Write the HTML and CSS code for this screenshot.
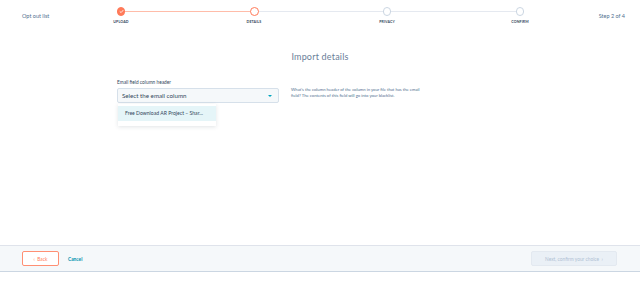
FILE: index.html
```html
<!DOCTYPE html>
<html lang="en">
<head>
    <meta charset="UTF-8">
    <meta name="viewport" content="width=device-width, initial-scale=1.0">
    <title>Opt out list - Import</title>
    <link rel="stylesheet" href="styles.css">
</head>
<body>

    <header class="top">
        <div class="title">Opt out list</div>
        <ol class="stepper">
            <li class="step done">
                <span class="dot">
                    <svg viewBox="0 0 10 10" width="5" height="5"><path d="M2 5.2 L4.2 7.2 L8 2.8" fill="none" stroke="#fff" stroke-width="1.6" stroke-linecap="round" stroke-linejoin="round"/></svg>
                </span>
                <span class="label">UPLOAD</span>
            </li>
            <li class="step current">
                <span class="dot"></span>
                <span class="label">DETAILS</span>
            </li>
            <li class="step">
                <span class="dot"></span>
                <span class="label">PRIVACY</span>
            </li>
            <li class="step">
                <span class="dot"></span>
                <span class="label">CONFIRM</span>
            </li>
        </ol>
        <div class="step-count">Step 2 of 4</div>
    </header>

    <main class="content">
        <h1>Import details</h1>

        <div class="field-row">
            <div class="field">
                <label class="field-label">Email field column header</label>
                <div class="select">
                    <span>Select the email column</span>
                    <span class="caret"></span>
                </div>
                <ul class="menu">
                    <li class="active">Free Download AR Project – Shar...</li>
                </ul>
            </div>
            <p class="help">What's the column header of the column in your file that has the email field? The contents of this field will go into your blacklist.</p>
        </div>
    </main>

    <footer class="bottom">
        <div class="left">
            <button class="btn-back">&lsaquo;&nbsp; Back</button>
            <a class="cancel" href="#">Cancel</a>
        </div>
        <button class="btn-next" disabled>Next, confirm your choice &nbsp;&rsaquo;</button>
    </footer>

</body>
</html>
```

FILE: styles.css
```css
* {
    box-sizing: border-box;
}
body {
    margin: 0;
    height: 282px;
    display: flex;
    flex-direction: column;
    font-family: Lato, "Open Sans", sans-serif;
    color: #33475b;
    background: #fff;
}
.top {
    height: 34px;
    display: flex;
    align-items: center;
    padding: 0 15px 0 22px;
}
.title {
    width: 32.5px;
    font-size: 5.5px;
    color: #516f90;
    white-space: nowrap;
    margin-top: -3px;
}
.stepper {
    display: flex;
    list-style: none;
    margin: 0;
    padding: 0;
}
.step {
    width: 133px;
    height: 20px;
    position: relative;
    display: flex;
    flex-direction: column;
    align-items: center;
}
.step:not(:last-child)::after {
    content: "";
    position: absolute;
    top: 4px;
    left: 50%;
    width: 100%;
    height: 1px;
    background: #e5e9f0;
    z-index: 0;
}
.step.done::after {
    background: #ffbca9;
}
.dot {
    position: relative;
    z-index: 1;
    width: 8.5px;
    height: 8.5px;
    border-radius: 50%;
    border: 1px solid #cbd6e2;
    background: #fff;
    display: flex;
    align-items: center;
    justify-content: center;
}
.step.done .dot {
    background: #ff7a59;
    border-color: #ff7a59;
}
.step.current .dot {
    width: 9px;
    height: 9px;
    margin-top: -0.25px;
    border: 1.4px solid #ff7a59;
}
.label {
    margin-top: 3px;
    font-size: 3.6px;
    font-weight: bold;
    letter-spacing: 0.1px;
    color: #33475b;
}
.step.current .label {
    margin-top: 2.75px;
}
.step-count {
    margin-left: auto;
    margin-top: -3px;
    font-size: 5.5px;
    color: #516f90;
}
.content {
    flex: 1;
}
h1 {
    margin: 17px 0 0;
    text-align: center;
    font-size: 9px;
    font-weight: normal;
    color: #6a8099;
    letter-spacing: 0.2px;
}
.field-row {
    display: flex;
    margin: 17px 0 0 117px;
}
.field {
    width: 162px;
}
.field-label {
    display: block;
    font-size: 4.8px;
    color: #33475b;
    margin-bottom: 3px;
}
.select {
    height: 15px;
    border: 1px solid #d6e0ea;
    border-radius: 2px;
    background: #f5f8fa;
    display: flex;
    align-items: center;
    justify-content: space-between;
    padding: 0 6px 0 4px;
    font-size: 6.2px;
    color: #33475b;
}
.caret {
    width: 0;
    height: 0;
    border-left: 2.5px solid transparent;
    border-right: 2.5px solid transparent;
    border-top: 2.5px solid #00a4bd;
}
.menu {
    list-style: none;
    margin: 1px 0 0 1px;
    padding: 2px 0 5px;
    width: 98px;
    background: #fff;
    box-shadow: 0 1px 4px rgba(45, 62, 80, 0.14);
}
.menu li {
    height: 15px;
    line-height: 15px;
    padding-left: 7px;
    font-size: 5.1px;
    color: #33475b;
}
.menu li.active {
    background: #e5f5f8;
}
.help {
    width: 136px;
    margin: 8px 0 0 12px;
    font-size: 4.2px;
    line-height: 6px;
    color: #516f90;
}
.bottom {
    height: 27px;
    margin-bottom: 10px;
    background: #f5f8fa;
    border-top: 1px solid #dfe3eb;
    border-bottom: 1px solid #cbd6e2;
    display: flex;
    align-items: center;
    justify-content: space-between;
    padding: 0 23px 0 22px;
}
.left {
    display: flex;
    align-items: center;
}
.btn-back {
    width: 37px;
    height: 15px;
    padding: 0;
    border: 1px solid #ff8f73;
    border-radius: 2px;
    background: #fff;
    color: #ff7a59;
    font-family: inherit;
    font-size: 4.8px;
    cursor: pointer;
}
.cancel {
    margin-left: 9px;
    font-size: 4.8px;
    font-weight: bold;
    color: #0091ae;
    text-decoration: none;
}
.btn-next {
    width: 86px;
    height: 15px;
    padding: 0;
    border: 1px solid #e3e9f0;
    border-radius: 2px;
    background: #eaf0f6;
    color: #b0c1d4;
    font-family: inherit;
    font-size: 4.8px;
}
```
